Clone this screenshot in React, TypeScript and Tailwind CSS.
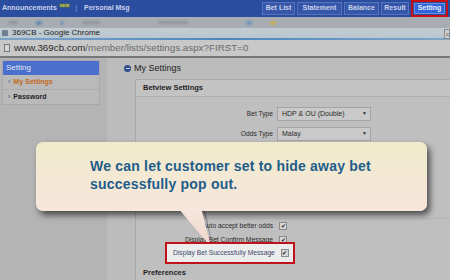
import React from 'react'

const Check = () => (
  <span className="inline-flex items-center justify-center w-[8px] h-[8px] border border-[#8a8a8a] bg-[#d6d6d6] text-[6px] leading-none text-[#222]">✔</span>
)

const tabs: { name: string, w: string }[] = [
  { name: 'Bet List', w: 'w-[33px]' },
  { name: 'Statement', w: 'w-[45px]' },
  { name: 'Balance', w: 'w-[35px]' },
  { name: 'Result', w: 'w-[28px]' },
]

const App = () => {
  return (
    <div className="relative w-[450px] h-[280px] overflow-hidden bg-[#b4b4b4] font-['Liberation_Sans',Arial,sans-serif]">
      {/* site top bar */}
      <div className="h-[17px] bg-[#2b4d9f] flex items-center pl-[2px] text-[7px] font-bold text-[#c9d3ea]">
        <span>Announcements</span>
        <span className="ml-[2px] -mt-[7px] text-[4px] text-[#d6d24a] bg-[#3a5a70] px-[1px] leading-[5px]">NEW</span>
        <span className="ml-[5px] font-normal text-[#8ea0c8]">|</span>
        <span className="ml-[7px]">Personal Msg</span>
        <div className="ml-auto flex h-full items-center gap-[2px] pr-[2px]">
          {tabs.map((t, idx) =>
            <span key={idx + 'tab'} className={t.w + " h-[13px] flex items-center justify-center border border-[#5574bb] bg-[#3556a9]"}>{t.name}</span>
          )}
          <span className="w-[37px] h-[17px] px-[1px] flex items-center border-2 border-[#c40d15] bg-[#2b4d9f]">
            <span className="w-full h-[11px] flex items-center justify-center bg-[#2f63d8] border border-[#6f8fe0] text-[#e8eefc]">Setting</span>
          </span>
        </div>
      </div>

      {/* chrome window chrome */}
      <div className="h-[11px] bg-[#a7adb2] flex items-center gap-[18px] pl-[8px] overflow-hidden">
        <span className="w-[10px] h-[3px] rounded-full bg-[#8e959b] blur-[1px]" />
        <span className="w-[6px] h-[4px] rounded-full bg-[#5f84b0] blur-[1px]" />
        <span className="w-[4px] h-[4px] rounded-full bg-[#6f93bb] blur-[1px]" />
        <span className="w-[18px] h-[3px] rounded-full bg-[#8e959b] blur-[1px]" />
        <span className="w-[30px] h-[3px] ml-[40px] rounded-full bg-[#8e959b] blur-[1px]" />
        <span className="w-[6px] h-[4px] ml-[40px] rounded-full bg-[#6f93bb] blur-[1px]" />
        <span className="w-[6px] h-[4px] rounded-full bg-[#c8b050] blur-[1px]" />
      </div>
      <div className="h-[10px] bg-gradient-to-b from-[#c3ccd2] to-[#b9c6d0] flex items-center pl-[2px] text-[8px] text-[#222] relative">
        <span className="w-[6px] h-[6px] mr-[4px] rounded-[1px] bg-[#6c7f95]" />
        <span>369CB - Google Chrome</span>
        <span className="absolute right-0 top-[1px] w-[6px] h-[10px] border border-[#888] bg-[#d0d0d0] text-[6px] leading-[8px] text-[#555] pl-[1px]">c</span>
      </div>
      <div className="h-[2px] bg-gradient-to-r from-[#7ea6c8] via-[#4e86bd] to-[#7ea6c8]" />
      <div className="h-[16px] bg-[#c8c8c8] flex items-center pl-[4px] text-[9.8px]">
        <span className="w-[6px] h-[8px] border border-[#777] bg-[#d8d8d8] mr-[4px]" />
        <span className="text-[#2a2a2a]">www.369cb.com</span>
        <span className="text-[#6a6a6a]">/member/lists/settings.aspx?FIRST=0</span>
      </div>
      <div className="h-[2px] bg-[#777777]" />

      {/* page */}
      <div className="flex h-[223px]">
        <div className="w-[107px] pt-[2px] pl-[2px]">
          <div className="w-[98px] border border-[#a8a8a8] bg-[#b9b9b9]">
            <div className="h-[14px] bg-[#4a6fcc] text-[8px] text-[#e4e8f4] flex items-center pl-[3px]">Setting</div>
            <div className="h-[15px] border-b border-[#acacac] flex items-center pl-[5px] text-[7px] font-bold text-[#c4691e]">
              <span className="text-[#5a6a8a] mr-[3px]">›</span>My Settings
            </div>
            <div className="h-[14px] flex items-center pl-[5px] text-[7px] font-bold text-[#1e1e1e]">
              <span className="text-[#5a6a8a] mr-[3px]">›</span>Password
            </div>
          </div>
        </div>

        <div className="flex-1 bg-[#bcbcbc]">
          <div className="h-[21px] flex items-center pl-[17px] text-[9px] text-[#1e1e1e]">
            <span className="w-[7px] h-[7px] mr-[3px] rounded-full bg-[#2f4e8e] flex items-center justify-center">
              <span className="w-[4px] h-[1px] bg-[#c8d0e0]" />
            </span>
            My Settings
          </div>
          <div className="ml-[28px] border-l border-t border-[#a9a9a9] bg-[#bfbfbf] h-[205px] text-[6.7px] text-[#2a2a2a]">
            <div className="h-[17px] bg-[#c3c3c3] border-b border-[#b0b0b0] flex items-center pl-[7px] text-[7.5px] font-bold text-[#1e1e1e]">Betview Settings</div>
            <div className="pt-[7px]">
              <div className="h-[20px] flex items-center">
                <span className="w-[137px] text-right">Bet Type</span>
                <span className="ml-[4px] w-[94px] h-[14px] border border-[#a4a4a4] bg-[#c9c9c9] flex items-center pl-[4px] text-[7px]">
                  HDP &amp; OU (Double)<span className="ml-auto mr-[3px] text-[5px]">▼</span>
                </span>
              </div>
              <div className="h-[20px] flex items-center">
                <span className="w-[137px] text-right">Odds Type</span>
                <span className="ml-[4px] w-[94px] h-[14px] border border-[#a4a4a4] bg-[#c9c9c9] flex items-center pl-[4px] text-[7px]">
                  Malay<span className="ml-auto mr-[3px] text-[5px]">▼</span>
                </span>
              </div>
              <div className="h-[75px] border-b border-[#b4b4b4]" />
              <div className="h-[14px] flex items-center">
                <span className="w-[137px] text-right">Auto accept better odds</span>
                <span className="ml-[6px]"><Check /></span>
              </div>
              <div className="h-[14px] flex items-center">
                <span className="w-[137px] text-right">Display Bet Confirm Message</span>
                <span className="ml-[6px]"><Check /></span>
              </div>
              <div className="h-[12px] flex items-center relative z-10">
                <div className="ml-[29px] w-[130px] h-[22px] -my-[5px] border-2 border-[#c0121b] bg-[#ececec] flex items-center pl-[6px] text-[#3a4a6a]">
                  <span>Display Bet Successfully Message</span>
                  <span className="ml-[6px]"><Check /></span>
                </div>
              </div>
              <div className="h-[19px] flex items-end pl-[7px] text-[7.5px] font-bold text-[#1e1e1e]">Preferences</div>
            </div>
          </div>
        </div>
      </div>

      {/* callout */}
      <div className="absolute left-[36px] top-[142px] w-[391px] h-[69px] rounded-[7px] bg-gradient-to-b from-[#f0ebcb] to-[#f7e6dc] shadow-[3px_4px_6px_rgba(0,0,0,0.6)] pl-[54px] pt-[15px] text-[14px] leading-[18px] font-bold tracking-[0.2px] text-[#1e5d8a]">
        <div>We can let customer set to hide away bet</div>
        <div>successfully pop out.</div>
      </div>
      <svg className="absolute left-[170px] top-[205px]" width="45" height="45" viewBox="0 0 45 45">
        <defs>
          <linearGradient id="tail" x1="0" y1="0" x2="0" y2="1">
            <stop offset="0" stopColor="#f7e6dc" />
            <stop offset="1" stopColor="#efd8cc" />
          </linearGradient>
        </defs>
        <polygon points="33,5 43,43 36,8" fill="rgba(0,0,0,0.25)" />
        <polygon points="8,3 31,3 41,42" fill="url(#tail)" />
      </svg>
    </div>
  )
}

export default App
